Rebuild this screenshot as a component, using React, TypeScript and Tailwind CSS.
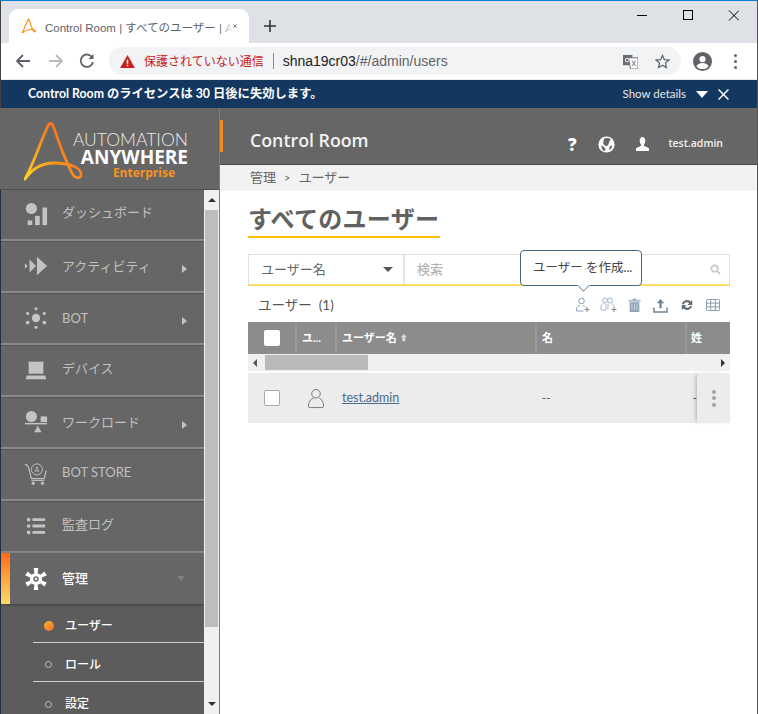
import { ReactNode } from "react";

const jp = "font-['Lato','Noto_Sans_CJK_JP',sans-serif]";

function Sm({ className, children, box = "0 0 24 24" }: { className?: string; children: ReactNode; box?: string }) {
  return (
    <svg viewBox={box} className={className}>
      {children}
    </svg>
  );
}

function Logo() {
  return (
    <svg viewBox="0 0 60 66" className="w-[60px] h-[66px] shrink-0">
      <defs>
        <linearGradient id="lg" x1="0" y1="1" x2="1" y2="0.2">
          <stop offset="0" stopColor="#ffd21f" />
          <stop offset="0.5" stopColor="#f7931e" />
          <stop offset="1" stopColor="#f15a24" />
        </linearGradient>
      </defs>
      <path
        d="M1 60 C9 46 17 22 23 9 C25 3 28 3 30 9 C35 24 43 44 47 52 C50 60 58 61 57 54 C56 48 44 44 30 44 C18 44 8 50 1 60 Z"
        fill="none"
        stroke="url(#lg)"
        strokeWidth="2.8"
        strokeLinejoin="round"
      />
    </svg>
  );
}

const ico = "w-[24px] h-[24px] shrink-0 fill-[#c4c4c4]";

const navIcons: Record<string, ReactNode> = {
  dash: (
    <Sm className={ico} box="0 0 26 26">
      <circle cx="8" cy="7" r="6" />
      <rect x="4" y="20" width="5" height="5" />
      <rect x="12" y="15" width="5" height="10" />
      <rect x="20" y="6" width="5" height="19" />
    </Sm>
  ),
  act: (
    <Sm className={ico} box="0 0 26 26">
      <path d="M1 10l3 3-3 3zM6 6l7 7-7 7zM14 3l11 10-11 10z" />
    </Sm>
  ),
  bot: (
    <Sm className={ico} box="0 0 26 26">
      <circle cx="13" cy="13" r="4.5" />
      <circle cx="13" cy="3" r="1.7" />
      <circle cx="13" cy="23" r="1.7" />
      <circle cx="4" cy="8" r="1.7" />
      <circle cx="22" cy="8" r="1.7" />
      <circle cx="4" cy="18" r="2" />
      <circle cx="22" cy="18" r="2" />
    </Sm>
  ),
  dev: (
    <Sm className={ico} box="0 0 26 26">
      <rect x="5" y="4" width="16" height="13" />
      <path d="M3 19h20l1 4H2z" />
    </Sm>
  ),
  load: (
    <Sm className={ico} box="0 0 26 26">
      <circle cx="8" cy="7" r="6" />
      <rect x="18" y="7" width="7" height="6" />
      <rect x="1" y="14" width="24" height="1.6" />
      <path d="M15 17l4 7h-8z" />
    </Sm>
  ),
  store: (
    <svg viewBox="0 0 26 26" className="w-[24px] h-[24px] shrink-0 fill-none stroke-[#c4c4c4]">
      <path d="M1 3c2-1 3 1 4 3l3 12h14l2-9" strokeWidth="1.2" />
      <circle cx="14" cy="8" r="6" strokeWidth="1" />
      <path d="M12 11l2-6 2 6M12.5 9.5h3" strokeWidth="0.8" />
      <path d="M8 20h14" strokeWidth="1" />
      <circle cx="10" cy="23" r="1.3" fill="#c4c4c4" />
      <circle cx="20" cy="23" r="1.3" fill="#c4c4c4" />
    </svg>
  ),
  log: (
    <Sm className={ico} box="0 0 26 26">
      <circle cx="5" cy="6" r="2" />
      <circle cx="5" cy="13" r="2" />
      <circle cx="5" cy="20" r="2" />
      <rect x="9" y="4.5" width="14" height="3" rx="1" />
      <rect x="9" y="11.5" width="14" height="3" rx="1" />
      <rect x="9" y="18.5" width="14" height="3" rx="1" />
    </Sm>
  ),
  admin: (
    <svg viewBox="0 0 26 26" className="w-[24px] h-[24px] shrink-0">
      <g fill="#fff">
        <path d="M10.5 1h5l-1 7h-3z" />
        <path d="M10.5 1h5l-1 7h-3z" transform="rotate(60 13 13)" />
        <path d="M10.5 1h5l-1 7h-3z" transform="rotate(120 13 13)" />
        <path d="M10.5 1h5l-1 7h-3z" transform="rotate(180 13 13)" />
        <path d="M10.5 1h5l-1 7h-3z" transform="rotate(240 13 13)" />
        <path d="M10.5 1h5l-1 7h-3z" transform="rotate(300 13 13)" />
        <circle cx="13" cy="13" r="6.5" />
      </g>
      <circle cx="13" cy="13" r="3" fill="#666" />
      <circle cx="13" cy="13" r="1.5" fill="#ddd" />
    </svg>
  ),
};

function NavRow({ icon, label, arrow, h }: { icon: string; label: string; arrow?: boolean; h: string }) {
  return (
    <div className={`${h} shrink-0 flex items-center pl-[23px] border-b-2 border-b-[#8a8a8a] border-t border-t-[#555] first:border-t-0`}>
      <div className="w-[38px] flex -mt-[2px]">{navIcons[icon]}</div>
      <span className={`text-[13px] text-[#c0c0c0] flex-1 ${arrow ? "" : "-mt-1"}`}>{label}</span>
      {arrow && <span className="mr-[17px] mt-1 border-y-[4px] border-y-transparent border-l-[5px] border-l-[#c4c4c4]" />}
    </div>
  );
}

function SubRow({ label, active, last }: { label: string; active?: boolean; last?: boolean }) {
  return (
    <div className={`flex items-center ml-[32px] h-[39px] pt-[5px] ${last ? "" : "border-b border-b-[#cfcfcf]"}`}>
      <div className="w-[32px] flex pl-[11px]">
        {active ? (
          <span className="w-[10px] h-[10px] rounded-full bg-gradient-to-br from-[#fbb03b] to-[#f26a21]" />
        ) : (
          <span className="ml-[1px] w-[7px] h-[7px] rounded-full border border-[#bdbdbd]" />
        )}
      </div>
      <span className="text-[12px] font-medium text-white">{label}</span>
    </div>
  );
}

function Sidebar() {
  return (
    <aside className="w-[220px] shrink-0 flex flex-col bg-[#666] border-r border-r-[#7d7d7d]">
      <div className="h-[82px] shrink-0 flex pl-[24px] pt-[11px] border-b border-b-[#4e4e4e]">
        <Logo />
        <div className="flex flex-col items-end w-[106px] -ml-[2px] pt-[12px] leading-none">
          <span className="text-[17.5px] text-[#e8e8e8] font-light font-['Lato',sans-serif] whitespace-nowrap leading-[18px]">AUTOMATION</span>
          <span className="text-[19px] text-white font-bold font-['Open_Sans',sans-serif] whitespace-nowrap leading-[17px]">ANYWHERE</span>
          <span className="text-[12px] text-[#f7931e] font-bold font-['Open_Sans',sans-serif] mt-[1px] mr-[13px]">Enterprise</span>
        </div>
      </div>
      <div className="flex flex-1 min-h-0">
        <nav className="w-[204px] flex flex-col border-l border-l-[#24303f] overflow-hidden">
          <NavRow icon="dash" label="ダッシュボード" h="h-[51px]" />
          <NavRow icon="act" label="アクティビティ" arrow h="h-[52px]" />
          <NavRow icon="bot" label="BOT" arrow h="h-[52px]" />
          <NavRow icon="dev" label="デバイス" h="h-[52px]" />
          <NavRow icon="load" label="ワークロード" arrow h="h-[52px]" />
          <NavRow icon="store" label="BOT STORE" h="h-[52px]" />
          <NavRow icon="log" label="監査ログ" h="h-[52px]" />
          <div className="h-[51px] shrink-0 flex items-center pr-[17px] shadow-[0_1px_3px_rgba(0,0,0,0.3)] z-10 bg-[#666]">
            <span className="w-[9px] h-full bg-gradient-to-b from-[#ff6a13] to-[#ffd966]" />
            <div className="w-[14px]" />
            <div className="w-[38px] flex">{navIcons.admin}</div>
            <span className="text-[13px] font-medium text-white flex-1">管理</span>
            <span className="border-x-[4px] border-x-transparent border-t-[5px] border-t-[#7f7f7f] -ml-[4px] mr-[2px]" />
          </div>
          <div className="flex-1 bg-[#5c5c5c]">
            <SubRow label="ユーザー" active />
            <SubRow label="ロール" />
            <SubRow label="設定" last />
          </div>
        </nav>
        <div className="w-[15px] bg-[#f0f0f0] flex flex-col items-center py-[8px]">
          <span className="border-x-[4px] border-x-transparent border-b-[4px] border-b-[#333]" />
          <div className="mt-[8px] w-[13px] h-[417px] bg-[#bdbdbd]" />
          <div className="flex-1" />
          <span className="border-x-[4px] border-x-transparent border-t-[4px] border-t-[#333]" />
        </div>
      </div>
    </aside>
  );
}

function Header() {
  return (
    <div className="h-[57px] shrink-0 bg-[#666] border-b border-b-[#4a4a4a] flex items-center pl-[30px] pr-[34px] text-white relative">
      <span className="absolute left-0 top-[12px] w-[3px] h-[32px] bg-[#f28c28]" />
      <span className="text-[17.8px] font-semibold font-['Open_Sans',sans-serif] text-[#f2f2f2] flex-1 mt-[8px]">Control Room</span>
      <div className="flex items-center mt-[16px]">
        <span className="text-[17px] font-black font-['Open_Sans',sans-serif] leading-none w-[34px] text-center">?</span>
        <svg viewBox="0 0 20 20" className="w-[17px] h-[17px] ml-[9px]">
          <circle cx="10" cy="10" r="9.5" fill="#fff" />
          <path d="M7 3c3-1 6-1 8 1l-2 3-1 4-3 1-3-3zM4 11l3 2 2 3-2 2c-2-1-3-4-3-7zM14 12l3-1-2 5-2 0z" fill="#666" />
        </svg>
        <svg viewBox="0 0 14 15" className="w-[13px] h-[14px] ml-[21px]">
          <path d="M7 0c2 0 3 2 3 4s-1 4-1.500 4.500v1L14 12v3H0v-3l5.500-2.500v-1C5 8 4 6 4 4s1-4 3-4z" fill="#fff" />
        </svg>
        <span className="ml-[19px] text-[10.5px] font-['Open_Sans',sans-serif] font-semibold text-[#f2f2f2]">test.admin</span>
      </div>
    </div>
  );
}

function ToolIcons() {
  return (
    <div className="flex items-center mr-[10px]">
      <svg viewBox="0 0 16 16" className="w-[16px] h-[16px] fill-none stroke-[#7f9ab8]" strokeWidth="0.9">
        <circle cx="6.500" cy="4" r="2.800" />
        <path d="M1.500 14v-2c0-2 2-3 3.500-3.500M8 8.500c1 .3 2 .8 2.500 1.500M1.500 14h7" />
        <path d="M12 10v5M9.500 12.500h5" stroke="#8a8a8a" strokeWidth="1.100" />
      </svg>
      <svg viewBox="0 0 18 16" className="w-[18px] h-[16px] ml-[9px] fill-none stroke-[#9fb0c2]" strokeWidth="0.9">
        <circle cx="5" cy="3.500" r="2.500" />
        <circle cx="10" cy="3.500" r="2.500" />
        <path d="M1 13v-3c0-2 1.500-3 2.500-3.500M12 6.500c1 .5 2 1.500 2 3M6 7v6H1M8 6.500v6" />
        <path d="M14 10v5M11.500 12.500h5" stroke="#8a8a8a" strokeWidth="1.100" />
      </svg>
      <svg viewBox="0 0 14 15" className="w-[13px] h-[14px] ml-[10px]">
        <path d="M0.500 2.500h13v1.300h-13zM5 .8h4v1.200H5z" fill="#8ea2b6" />
        <path d="M1.800 4.500h10.400V15H1.800z" fill="#8ea2b6" />
        <path d="M4.300 6v7M7 6v7M9.700 6v7" stroke="#d6dee6" strokeWidth="1" />
      </svg>
      <svg viewBox="0 0 16 16" className="w-[15px] h-[15px] ml-[12px]">
        <path d="M8 1l4 4.500H9.200V11H6.800V5.500H4z" fill="#6f8296" />
        <path d="M1 10v5h14v-5" fill="none" stroke="#6f8296" strokeWidth="1.500" />
      </svg>
      <svg viewBox="0 0 16 16" className="w-[14px] h-[14px] ml-[12px]">
        <path d="M2 7a6 6 0 0 1 10-3l2-1.500V8H8.500l2-1.800A3.800 3.800 0 0 0 4.300 7zM14 9a6 6 0 0 1-10 3l-2 1.500V8h5.500l-2 1.800A3.800 3.800 0 0 0 11.700 9z" fill="#5f6b77" />
      </svg>
      <svg viewBox="0 0 15 13" className="w-[14px] h-[12px] ml-[12px] fill-none stroke-[#7f93a8]" strokeWidth="1">
        <rect x="0.500" y="0.500" width="14" height="12" rx="1" />
        <path d="M0.500 4.500h14M0.500 8.500h14M5 .5v12M10 .5v12" />
      </svg>
    </div>
  );
}

function TableArea() {
  return (
    <div className="mt-[9px] relative">
      <div className="h-[32px] bg-[#8c8c8c] flex text-white text-[11px] font-bold">
        <div className="w-[47px] flex items-center pl-[16px]">
          <span className="w-[16px] h-[16px] bg-white rounded-[2px]" />
        </div>
        <div className="w-[40px] flex items-center pl-[5px] border-l-2 border-l-[#999]">ユ...</div>
        <div className="w-[200px] flex items-center pl-[5px] border-l-2 border-l-[#999]">
          ユーザー名<span className="ml-[3px] text-[8px] text-[#ddd]">⬆</span>
        </div>
        <div className="w-[150px] flex items-center pl-[5px] border-l-2 border-l-[#999]">名</div>
        <div className="flex-1 flex items-center pl-[4px] border-l-2 border-l-[#999]">姓</div>
      </div>
      <div className="h-[17px] bg-[#f0f0f0] flex items-center pl-[5px] pr-[5px]">
        <span className="border-y-[4px] border-y-transparent border-r-[4px] border-r-[#555]" />
        <div className="ml-[8px] w-[103px] h-[15px] bg-[#bababa]" />
        <div className="flex-1" />
        <span className="border-y-[4px] border-y-transparent border-l-[4px] border-l-[#333]" />
      </div>
      <div className="mt-[2px] h-[50px] bg-[#ececec] flex items-center text-[12px] text-[#555]">
        <div className="w-[48px] pl-[16px] flex">
          <span className="w-[16px] h-[16px] bg-white rounded-[2px] border border-[#aaa]" />
        </div>
        <div className="w-[46px] flex pl-[11px]">
          <svg viewBox="0 0 18 22" className="w-[18px] h-[21px] fill-none stroke-[#777]" strokeWidth="1">
            <circle cx="9" cy="6" r="4.500" />
            <path d="M6.500 10.500C3 12 1 15 1 19c0 1 .5 1.500 1.500 1.500h13c1 0 1.500-.5 1.500-1.500 0-4-2-7-4.500-8.500" />
          </svg>
        </div>
        <a href="#" className="w-[200px] text-[#4a6a8a] underline font-['Lato',sans-serif] text-[12.5px]">test.admin</a>
        <div className="w-[151px]">--</div>
        <span>-</span>
        <div className="ml-auto w-[33px] self-stretch flex flex-col items-center justify-center gap-[2.500px] shadow-[-3px_0_4px_-2px_rgba(0,0,0,0.25)] bg-[#ececec]">
          <span className="w-[4px] h-[4px] rounded-full bg-[#a3a3a3]" />
          <span className="w-[4px] h-[4px] rounded-full bg-[#a3a3a3]" />
          <span className="w-[4px] h-[4px] rounded-full bg-[#a3a3a3]" />
        </div>
      </div>
    </div>
  );
}

function Content() {
  return (
    <main className="flex-1 flex flex-col min-w-0 bg-white border-r border-r-[#555]">
      <Header />
      <div className="h-[26px] shrink-0 bg-[#f2f2f2] pl-[30px] flex items-center text-[13px] text-[#666] gap-[8px]">
        <span>管理</span>
        <span className="text-[11px]">&gt;</span>
        <span>ユーザー</span>
      </div>
      <div className="flex-1 pl-[28px] pr-[27px] pt-[12px]">
        <div className="flex">
          <h1 className="w-[192px] text-[24px] whitespace-nowrap font-bold text-[#616161] leading-[32px] pb-[1px] border-b-[2px] border-b-[#ffc000] tracking-[0.3px]">すべてのユーザー</h1>
        </div>
        <div className="mt-[16px] relative">
          <div className="h-[32px] flex border border-[#e0e0e0] border-b-2 border-b-[#ffd966] text-[13px]">
            <div className="w-[156px] flex items-center pl-[12px] pr-[10px] border-r-2 border-r-[#e6e6e6] text-[#666]">
              <span className="flex-1">ユーザー名</span>
              <span className="border-x-[5px] border-x-transparent border-t-[5px] border-t-[#555]" />
            </div>
            <div className="flex-1 flex items-center pl-[12px] text-[#aaa]">
              <span className="flex-1">検索</span>
              <svg viewBox="0 0 12 12" className="w-[11px] h-[11px] mr-[8px] fill-none stroke-[#c8c8c8]" strokeWidth="1.800">
                <circle cx="5" cy="5" r="3.500" />
                <path d="M7.500 7.500L11 11" />
              </svg>
            </div>
          </div>
          <div className="absolute left-[272px] -top-[4px] w-[122px] h-[36px] bg-white border border-[#4a6785] rounded-[4px] flex items-center pl-[12px] text-[12.500px] text-[#444] z-10">
            ユーザー を作成...
            <span className="absolute left-[58px] -bottom-[5px] w-[9px] h-[9px] bg-white border-r border-b border-r-[#7f93a8] border-b-[#7f93a8] rotate-45" />
          </div>
        </div>
        <div className="mt-[11px] h-[16px] flex items-center justify-between pl-[10px]">
          <span className="text-[13.500px] text-[#555]">
            ユーザー<span className="ml-[7px]">(1)</span>
          </span>
          <ToolIcons />
        </div>
        <TableArea />
      </div>
    </main>
  );
}

function BrowserChrome() {
  return (
    <header className="shrink-0 border-t border-t-[#0a7ed6] border-l border-l-[#444] border-r border-r-[#555]">
      <div className="h-[42px] bg-[#dee1e6] flex items-end pl-[8px] relative">
        <div className="w-[240px] h-[34px] bg-white rounded-t-[9px] flex items-center pl-[12px] pr-[12px]">
          <svg viewBox="0 0 16 16" className="w-[16px] h-[16px] shrink-0 fill-none" strokeWidth="1.200">
            <path d="M1 15C4 10 5 5 7.500 1c2 4 3 9 5 12 1 1.500 2.500.5 1.500-.5-2-1.500-7-2-13 2.500" stroke="#f7931e" />
          </svg>
          <div className="ml-[8px] relative whitespace-nowrap">
            <span className="text-[11.500px] text-[#5f6368] font-['Liberation_Sans','Noto_Sans_CJK_JP',sans-serif]">Control Room | すべてのユーザー | A</span>
            <span className="absolute right-0 top-0 bottom-0 w-[14px] bg-gradient-to-r from-transparent to-white" />
          </div>
          <svg viewBox="0 0 10 10" className="ml-auto w-[8px] h-[8px] stroke-[#444]" strokeWidth="1.800">
            <path d="M1 1l8 8M9 1l-8 8" />
          </svg>
        </div>
        <svg viewBox="0 0 12 12" className="w-[12px] h-[12px] ml-[15px] mb-[11px] stroke-[#333]" strokeWidth="1.600">
          <path d="M6 0v12M0 6h12" />
        </svg>
        <svg viewBox="0 0 102 16" className="absolute left-[636px] top-[6px] w-[102px] h-[16px] fill-none stroke-black" strokeWidth="1">
          <path d="M0 8.500h10" />
          <rect x="46.500" y="3.500" width="9" height="9" />
          <path d="M92 3.500l10 10M102 3.500l-10 10" />
        </svg>
      </div>
      <div className="h-[37px] bg-white flex items-center relative border-b border-b-[#e8e8e8]">
        <svg viewBox="0 0 16 16" className="ml-[14px] w-[16px] h-[16px] fill-none stroke-[#5f6368]" strokeWidth="1.800">
          <path d="M15 8H2M8 2L2 8l6 6" />
        </svg>
        <svg viewBox="0 0 16 16" className="ml-[17px] w-[16px] h-[16px] fill-none stroke-[#b8babd]" strokeWidth="1.800">
          <path d="M1 8h13M8 2l6 6-6 6" />
        </svg>
        <svg viewBox="0 0 16 16" className="ml-[15px] w-[16px] h-[16px] fill-none stroke-[#5f6368]" strokeWidth="1.800">
          <path d="M13.500 5A6.200 6.200 0 1 0 14 9" />
          <path d="M14.500 1v5h-5z" fill="#5f6368" stroke="none" />
        </svg>
        <div className="ml-[14px] w-[572px] h-[28px] rounded-full bg-[#f1f3f4] flex items-center pl-[11px] pr-[11px]">
          <svg viewBox="0 0 16 14" className="w-[15px] h-[13px] shrink-0">
            <path d="M8 0l8 14H0z" fill="#c5221f" />
            <rect x="7.200" y="5" width="1.600" height="4.500" fill="#fff" />
            <rect x="7.200" y="10.500" width="1.600" height="1.600" fill="#fff" />
          </svg>
          <span className="ml-[9px] text-[12px] text-[#c5221f] font-['Noto_Sans_CJK_JP',sans-serif]">保護されていない通信</span>
          <span className="ml-[9px] w-px h-[16px] bg-[#8a8d91]" />
          <span className="ml-[9px] text-[14px] text-[#5f6368] font-['Liberation_Sans',sans-serif] flex-1">
            <span className="text-[#202124]">shna19cr03</span>/#/admin/users
          </span>
          <svg viewBox="0 0 16 16" className="w-[15px] h-[15px] mr-[17px] ml-[2px]">
            <rect x="0" y="1" width="10" height="11" fill="#6b6e72" />
            <path d="M6 4h10v12H8z" fill="#fff" stroke="#6b6e72" />
            <path d="M9.500 7l4 6M13.500 7l-4 6" stroke="#6b6e72" strokeWidth="1" />
            <circle cx="4.500" cy="6.500" r="2" fill="none" stroke="#fff" strokeWidth="1" />
          </svg>
          <svg viewBox="0 0 16 16" className="w-[15px] h-[15px] fill-none stroke-[#5f6368]" strokeWidth="1.300">
            <path d="M8 1.500l2 4.500 4.800.5-3.600 3.200 1 4.800L8 12l-4.200 2.500 1-4.800L1.200 6.500 6 6z" />
          </svg>
        </div>
        <svg viewBox="0 0 20 20" className="ml-[12px] w-[19px] h-[19px]">
          <circle cx="10" cy="10" r="10" fill="#5f6368" />
          <circle cx="10" cy="7.500" r="3.200" fill="#fff" />
          <path d="M3.500 15c1.500-2.500 4-3.300 6.500-3.300s5 .8 6.500 3.300c-1.500 2-4 3-6.500 3s-5-1-6.500-3z" fill="#fff" />
        </svg>
        <div className="ml-[22px] flex flex-col gap-[3px]">
          <span className="w-[3px] h-[3px] rounded-full bg-[#5f6368]" />
          <span className="w-[3px] h-[3px] rounded-full bg-[#5f6368]" />
          <span className="w-[3px] h-[3px] rounded-full bg-[#5f6368]" />
        </div>
      </div>
      <div className="h-[28px] bg-[#14375f] flex items-center pl-[27px] pr-[28px] text-white">
        <span className="text-[12.300px] font-bold flex-1 whitespace-nowrap">Control Room のライセンスは 30 日後に失効します。</span>
        <span className="text-[11.500px] text-[#e6e6e6]">Show details</span>
        <span className="ml-[10px] border-x-[6px] border-x-transparent border-t-[7px] border-t-white" />
        <svg viewBox="0 0 10 10" className="ml-[10px] w-[11px] h-[11px] stroke-white" strokeWidth="1.300">
          <path d="M0.500 0.500l9 9M9.500 0.500l-9 9" />
        </svg>
      </div>
    </header>
  );
}

export default function App() {
  return (
    <div className={`w-[758px] h-[714px] overflow-hidden flex flex-col ${jp}`}>
      <BrowserChrome />
      <div className="flex-1 min-h-0 flex">
        <Sidebar />
        <Content />
      </div>
    </div>
  );
}
